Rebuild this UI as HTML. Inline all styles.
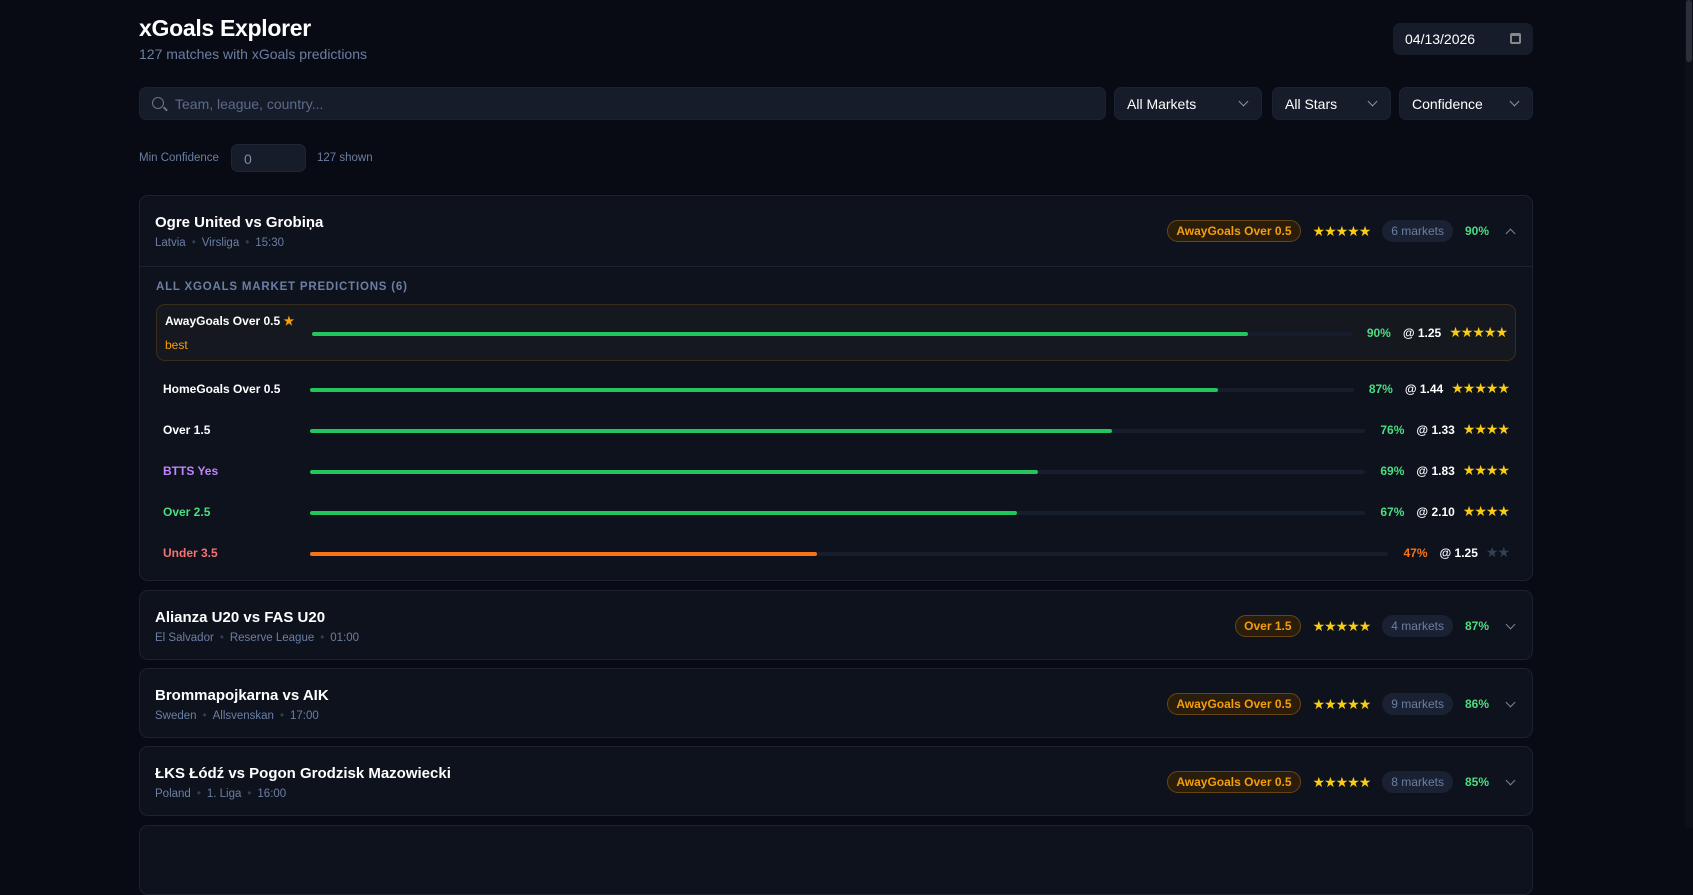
<!DOCTYPE html>
<html><head><meta charset="utf-8"><style>
*{box-sizing:border-box;margin:0;padding:0}
body{width:1693px;height:828px;overflow:hidden;background:#080b13;font-family:"Liberation Sans",sans-serif;color:#e5e7eb;position:relative}
.sb{position:absolute;right:0;top:0;width:8px;height:828px;background:#0d1017}
.sb i{position:absolute;left:1px;top:0;width:6px;height:62px;background:#2a2f3a;border-radius:3px}
.wrap{position:absolute;left:139px;width:1394px;top:0}
h1{position:absolute;top:15px;left:0;font-size:23px;font-weight:700;color:#fff;letter-spacing:-0.3px}
.sub{position:absolute;top:46px;left:0;font-size:14px;color:#6b7fa3}
.date{position:absolute;left:1254px;top:23px;width:140px;height:32px;background:#161c2a;border-radius:7px;font-size:14px;color:#fff;padding:8px 12px}
.date b{position:absolute;right:12px;top:10px;width:11px;height:11px;border:2px solid #888;border-top-width:3px;border-radius:2px}
.ctl{position:absolute;top:87px;height:33px;background:#161c2a;border-radius:7px;font-size:14px;color:#fff;padding:8px 12px;border:1px solid #1b2232}
.ctl .ch{position:absolute;right:14px;top:10px;width:7px;height:7px;border-right:1.5px solid #8b93a5;border-bottom:1.5px solid #8b93a5;transform:rotate(45deg)}
.search{left:0;width:967px;color:#5c6b88;padding-left:35px}
.search .mg{position:absolute;left:12px;top:9px;width:12px;height:12px;border:1.6px solid #6b7689;border-radius:50%}
.search .mg:after{content:"";position:absolute;left:10px;top:10px;width:5px;height:1.6px;background:#6b7689;transform:rotate(45deg)}
.mc{position:absolute;top:152px;font-size:11.5px;color:#6b7fa3}
.mci{position:absolute;left:92px;top:144px;width:75px;height:28px;background:#161c2a;border-radius:7px;border:1px solid #1f2636;font-size:14px;color:#7c8aa5;padding:6px 12px}
.card{position:absolute;left:0;width:1394px;background:#0e121d;border:1px solid #1c2232;border-radius:9px}
.hd{position:relative;height:70px}
.tt{position:absolute;left:15px;top:18px;font-size:15px;font-weight:700;color:#fff}
.meta{position:absolute;left:15px;top:41px;font-size:11.5px;color:#6b7fa3}
.meta span{color:#333d52;margin:0 6px}
.rt{position:absolute;right:0;top:0;height:70px;display:flex;align-items:center}
.badge{border:1px solid #6a4514;background:#2a1d0c;color:#f59e0b;font-weight:700;font-size:12px;border-radius:11px;padding:3px 8px;margin-right:12px}
.st{color:#facc15;font-size:14px;letter-spacing:-1px;margin-right:12px}
.mk{background:#1a2133;color:#6b7fa3;font-size:12px;border-radius:11px;padding:4px 9px;margin-right:12px}
.pc{color:#4ade80;font-weight:700;font-size:12px;margin-right:18px}
.cv{width:7px;height:7px;border-right:1.5px solid #7a8399;border-bottom:1.5px solid #7a8399;transform:rotate(45deg);margin-right:18px;margin-top:-4px}
.cv.up{transform:rotate(-135deg);margin-top:4px}
.body{border-top:1px solid #1c2232;padding:13px 16px 0 16px}
.lab{font-size:11.5px;font-weight:700;letter-spacing:0.8px;color:#6b7fa3;margin-top:1px;margin-bottom:11px}
.row{display:flex;align-items:center;height:41px;padding:0 7px}
.row.best{height:57px;background:#16181f;border:1px solid #3a2c1a;border-radius:9px;margin-bottom:7px;padding:0 8px}
.nm{width:147px;font-size:12px;font-weight:700;color:#fff}
.nm small{display:block;color:#f59e0b;font-weight:400;font-size:12px;margin-top:10px}
.tr{flex:1;height:4px;background:#161d2c;border-radius:2px;margin-right:15px;margin-top:2px}
.tr i{display:block;height:4px;border-radius:2px;background:#22c55e}
.p{font-size:12px;font-weight:700;color:#4ade80;margin-right:12px}
.o{font-size:12px;font-weight:700;color:#fff;margin-right:8px}
.s{font-size:14px;color:#facc15;letter-spacing:-1px}
</style></head><body>
<div class="sb"><i></i></div>
<div class="wrap">
<h1>xGoals Explorer</h1>
<div class="sub">127 matches with xGoals predictions</div>
<div class="date">04/13/2026<b></b></div>
<div class="ctl search"><span class="mg"></span>Team, league, country...</div>
<div class="ctl" style="left:975px;width:148px">All Markets<span class="ch"></span></div>
<div class="ctl" style="left:1133px;width:119px">All Stars<span class="ch"></span></div>
<div class="ctl" style="left:1260px;width:134px">Confidence<span class="ch"></span></div>
<div class="mc" style="left:0">Min Confidence</div>
<div class="mci">0</div>
<div class="mc" style="left:178px">127 shown</div>

<div class="card" style="top:195px;height:386px">
<div class="hd"><div class="tt">Ogre United vs Grobiņa</div><div class="meta">Latvia<span>•</span>Virsliga<span>•</span>15:30</div>
<div class="rt"><span class="badge">AwayGoals Over 0.5</span><span class="st">★★★★★</span><span class="mk">6 markets</span><span class="pc">90%</span><span class="cv up"></span></div></div>
<div class="body">
<div class="lab">ALL XGOALS MARKET PREDICTIONS (6)</div>
<div class="row best"><div class="nm">AwayGoals Over 0.5 <span style="color:#f59e0b">★</span><small>best</small></div><div class="tr"><i style="width:90%"></i></div><span class="p">90%</span><span class="o">@ 1.25</span><span class="s">★★★★★</span></div>
<div class="row"><div class="nm">HomeGoals Over 0.5</div><div class="tr"><i style="width:87%"></i></div><span class="p">87%</span><span class="o">@ 1.44</span><span class="s">★★★★★</span></div>
<div class="row"><div class="nm">Over 1.5</div><div class="tr"><i style="width:76%"></i></div><span class="p">76%</span><span class="o">@ 1.33</span><span class="s">★★★★</span></div>
<div class="row"><div class="nm" style="color:#c084fc">BTTS Yes</div><div class="tr"><i style="width:69%"></i></div><span class="p">69%</span><span class="o">@ 1.83</span><span class="s">★★★★</span></div>
<div class="row"><div class="nm" style="color:#4ade80">Over 2.5</div><div class="tr"><i style="width:67%"></i></div><span class="p">67%</span><span class="o">@ 2.10</span><span class="s">★★★★</span></div>
<div class="row"><div class="nm" style="color:#f87171">Under 3.5</div><div class="tr"><i style="width:47%;background:#f97316"></i></div><span class="p" style="color:#f97316">47%</span><span class="o">@ 1.25</span><span class="s" style="color:#334155">★★</span></div>
</div></div>

<div class="card" style="top:590px;height:70px"><div class="hd"><div class="tt">Alianza U20 vs FAS U20</div><div class="meta">El Salvador<span>•</span>Reserve League<span>•</span>01:00</div>
<div class="rt"><span class="badge">Over 1.5</span><span class="st">★★★★★</span><span class="mk">4 markets</span><span class="pc">87%</span><span class="cv"></span></div></div></div>
<div class="card" style="top:668px;height:70px"><div class="hd"><div class="tt">Brommapojkarna vs AIK</div><div class="meta">Sweden<span>•</span>Allsvenskan<span>•</span>17:00</div>
<div class="rt"><span class="badge">AwayGoals Over 0.5</span><span class="st">★★★★★</span><span class="mk">9 markets</span><span class="pc">86%</span><span class="cv"></span></div></div></div>
<div class="card" style="top:746px;height:70px"><div class="hd"><div class="tt">ŁKS Łódź vs Pogon Grodzisk Mazowiecki</div><div class="meta">Poland<span>•</span>1. Liga<span>•</span>16:00</div>
<div class="rt"><span class="badge">AwayGoals Over 0.5</span><span class="st">★★★★★</span><span class="mk">8 markets</span><span class="pc">85%</span><span class="cv"></span></div></div></div>
<div class="card" style="top:825px;height:70px"></div>
</div>
</body></html>
